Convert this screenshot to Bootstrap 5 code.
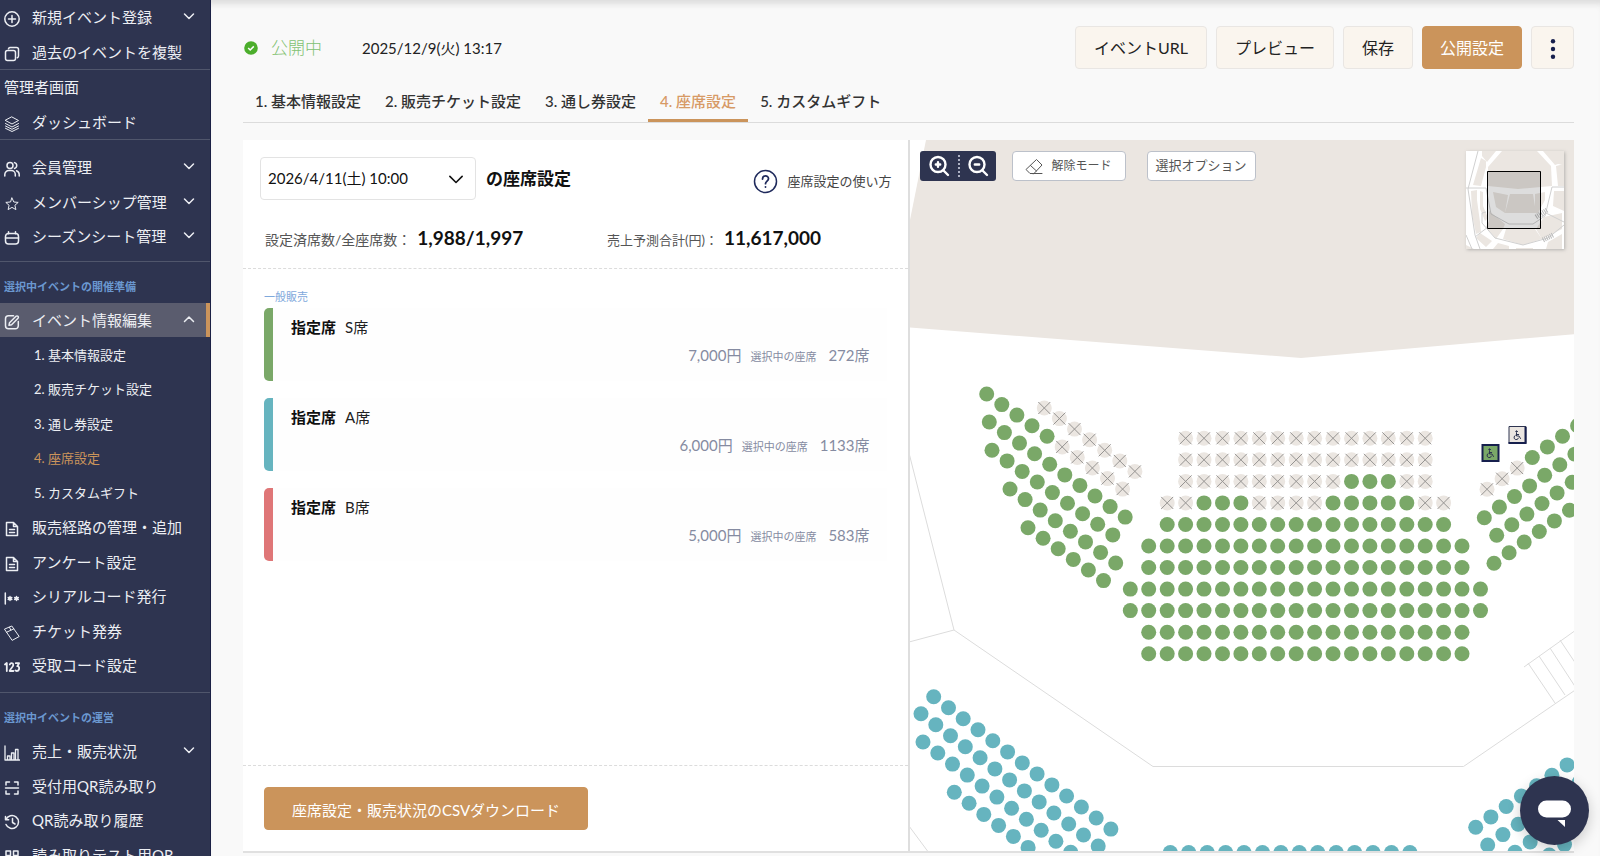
<!DOCTYPE html>
<html lang="ja">
<head>
<meta charset="utf-8">
<meta name="viewport" content="width=device-width, initial-scale=1">
<title>座席設定</title>
<link href="https://cdn.jsdelivr.net/npm/bootstrap@5.3.0/dist/css/bootstrap.min.css" rel="stylesheet">
<style>
  :root { --navy:#2e3450; --gold:#cb945b; --seat-s:#7aa868; --seat-a:#66b4bf; --seat-b:#df7677; --field:#ebe6e1; }
  body { font-family: Lato, "Noto Sans CJK JP", sans-serif; font-size:15px; line-height:24px; color:#222; background:#f9f9f9; }
  svg.ico { fill:none; stroke:currentColor; stroke-width:1.5; stroke-linecap:round; stroke-linejoin:round; flex:none; }

  .side { width:211px; flex:none; background:var(--navy); border-right:1px solid #1b2145; color:#eceef3; }
  .side .group { border-bottom:1px solid #50566c; }
  .side .group-pad { padding:10px 0 8px; }
  .side .group-end { padding-bottom:10px; }
  .side .nav-link { height:34px; padding:0 15px 0 4px; display:flex; align-items:center; color:inherit; white-space:nowrap; }
  .side .nav-item:nth-child(even) .nav-link { height:35px; }
  .side .nav-link .ico { width:16px; height:16px; margin:4px 12px 0 0; }
  .side .nav-link .chev { width:12px; height:12px; margin:0 0 2px auto; }
  .side .nav-link .fine { stroke-width:1; }
  .side .active-row { background:#5a5c6e; border-right:4px solid var(--gold); padding-right:11px; }
  .side .sub { padding-left:34px; font-size:13px; }
  .side .current { color:var(--gold); }
  .side .section-title { height:41px; padding:8px 0 0 4px; font-size:11px; font-weight:700; color:#6b98d0; margin:0; display:flex; align-items:center; }

  .main-area { min-width:0; padding:26px 26px 3px 32px; box-shadow:inset 0 8px 6px -4px #dcdcdc; }
  .status { color:#82c272; font-size:17px; font-weight:300; margin-left:13px; }
  .published { margin-left:40px; }
  .head-btn { height:43px; padding:0 18px; font-size:16px; border-color:#e9e6e3; background:#faf5ee; color:#222; border-radius:4px; }
  .btn-gold { background:var(--gold); border-color:var(--gold); color:#fff; border-radius:4px; }
  .head-btn.btn-gold { padding:0 17px; }
  .head-gap { gap:9px; }
  .head-btn.more { width:43px; padding:0; }

  .steps { border-bottom:1px solid #dcdcdc; margin-top:13px; }
  .steps .nav-link { padding:7px 12px 6px; color:#333; font-weight:500; border-bottom:3px solid transparent; }
  .steps .nav-link.active { color:#d79a66; border-color:var(--gold); }

  .panels { margin-top:17px; border-bottom:2px solid #e0e0e0; min-height:0; }
  .panel-half { flex:1 1 0; min-width:0; }
  .date-select { width:216px; height:43px; padding:0 36px 0 7px; font-size:15px; color:#111; border-color:#e3e3e3; border-radius:4px;
    background-image:url("data:image/svg+xml,%3Csvg xmlns='http://www.w3.org/2000/svg' viewBox='0 0 16 16'%3E%3Cpath fill='none' stroke='%23111' stroke-width='1.8' stroke-linecap='round' stroke-linejoin='round' d='m1 5 7 7 7-7'/%3E%3C/svg%3E");
    background-size:14px; background-position:right 12px center; }
  .panel-top { padding:17px 16px 0 17px; border-bottom:1px dashed #dcdcdc; height:129px; }
  .panel-title { font-size:17px; font-weight:700; color:#111; margin:0 0 0 10px; }
  .help { font-size:13px; color:#444; margin-top:5px; gap:9px; }
  .stats { margin-top:26px; padding-left:5px; }
  .stats dt { font-size:13px; font-weight:400; color:#555; }
  .stats dd { font-size:19px; font-weight:700; color:#111; margin:0 0 0 6px; }
  .stats .first-stat { width:342px; }
  .stats .first-stat dt { font-size:14px; }
  .tickets { padding:16px 21px 0; }
  .sale-type { font-size:11px; line-height:23px; color:#7fa9dc; }
  .ticket { height:73px; border-left:9px solid; border-radius:5px 0 0 5px; background:#fefefe; padding:7px 17px 0 18px; margin-bottom:17px; }
  .ticket .price-line { color:#858ba1; margin-top:4px; }
  .ticket small { font-size:11px; margin:0 12px 0 9px; }
  .ticket b { color:#111; margin-right:9px; }
  .tone-s { border-color:var(--seat-s); } .tone-a { border-color:var(--seat-a); } .tone-b { border-color:var(--seat-b); }
  .panel-foot { padding:21px; border-top:1px dashed #dcdcdc; height:86px; }
  .csv { height:43px; padding:4px 27px 0; font-size:15px; }

  .map { flex-basis:2px; border-left:2px solid #dedede; overflow:hidden; }
  .map-canvas { position:absolute; inset:0; }
  .map-tools { position:absolute; top:11px; left:10px; right:10px; }
  .zoomer { background:var(--navy); border-radius:3px; height:30px; width:76px; }
  .zoomer .btn { border:0; border-radius:0; padding:0; width:38px; color:#fff; }
  .zoomer .btn + .btn { border-left:2px dotted #aeb2c4; }
  .tool-btn { height:30px; padding:0 8px; font-size:13px; background:#fff; border-color:#bcc1ca; color:#555; border-radius:4px; }
  .tool-btn.erase { width:114px; font-size:12px; margin:0 21px 0 16px; }
  .mini { width:98px; height:98px; background:#fff; box-shadow:1px 1px 3px #8888; }
  .chat { position:fixed; right:11px; bottom:11px; width:69px; height:69px; border:0; border-radius:50%; background:var(--navy); padding:0; box-shadow:0 4px 14px #0003; }
</style>
</head>
<body>
<div class="d-flex vh-100 overflow-hidden">

  <aside class="side overflow-hidden">
    <ul class="nav flex-column flex-nowrap group">
      <li class="nav-item"><a class="nav-link" href="#"><svg class="ico" viewBox="0 0 16 16"><circle cx="8" cy="8" r="7.2"/><path d="M8 4.5v7M4.5 8h7"/></svg>新規イベント登録<svg class="ico chev" viewBox="0 0 12 12"><path d="m1.500 4 4.500 4.500L10.500 4"/></svg></a></li>
      <li class="nav-item"><a class="nav-link" href="#"><svg class="ico" viewBox="0 0 16 16"><rect x="1.500" y="4.500" width="10" height="10" rx="2"/><path d="M4.500 2.800A2 2 0 0 1 6 1.500h6.500a2 2 0 0 1 2 2V10a2 2 0 0 1-1.200 1.700"/></svg>過去のイベントを複製</a></li>
    </ul>
    <ul class="nav flex-column flex-nowrap group">
      <li class="nav-item"><a class="nav-link" href="#">管理者画面</a></li>
      <li class="nav-item"><a class="nav-link" href="#"><svg class="ico fine" viewBox="0 0 16 16"><path d="m8 1 6.500 3.500L8 8 1.500 4.500zM1.500 7.500 8 11l6.500-3.500M1.500 10 8 13.300l6.500-3.300M1.500 12.300 8 15.500l6.500-3.200"/></svg>ダッシュボード</a></li>
    </ul>
    <ul class="nav flex-column flex-nowrap group group-pad">
      <li class="nav-item"><a class="nav-link" href="#"><svg class="ico" viewBox="0 0 16 16"><circle cx="6" cy="4.500" r="3"/><path d="M.8 15v-1.500a4 4 0 0 1 4-4h2.500a4 4 0 0 1 4 4V15M10.500 1.600a3 3 0 0 1 0 5.800M12.500 9.700a4 4 0 0 1 2.700 3.800V15"/></svg>会員管理<svg class="ico chev" viewBox="0 0 12 12"><path d="m1.500 4 4.500 4.500L10.500 4"/></svg></a></li>
      <li class="nav-item"><a class="nav-link" href="#"><svg class="ico fine" viewBox="0 0 16 16"><path d="m8 2 1.800 4 4.400.4-3.300 2.900 1 4.300L8 11.400l-3.900 2.200 1-4.300-3.300-2.900 4.400-.4z"/></svg>メンバーシップ管理<svg class="ico chev" viewBox="0 0 12 12"><path d="m1.500 4 4.500 4.500L10.500 4"/></svg></a></li>
      <li class="nav-item"><a class="nav-link" href="#"><svg class="ico" viewBox="0 0 16 16"><rect x="1.500" y="3.500" width="13" height="10.500" rx="3"/><path d="M1.500 8h13M4.500 1.800v2M11.500 1.800v2"/></svg>シーズンシート管理<svg class="ico chev" viewBox="0 0 12 12"><path d="m1.500 4 4.500 4.500L10.500 4"/></svg></a></li>
    </ul>
    <h2 class="section-title">選択中イベントの開催準備</h2>
    <ul class="nav flex-column flex-nowrap group group-end">
      <li class="nav-item"><a class="nav-link active-row" href="#"><svg class="ico" viewBox="0 0 16 16"><path d="M9.500 1.800H4.500a3 3 0 0 0-3 3v7a3 3 0 0 0 3 3h6.800a3 3 0 0 0 3-3V7.500M5 11.300l.5-2.600 6.500-6.400a1.300 1.300 0 0 1 2 2L7.600 10.700z"/></svg>イベント情報編集<svg class="ico chev" viewBox="0 0 12 12"><path d="M1.500 8.500 6 4l4.500 4.500"/></svg></a></li>
      <li class="nav-item"><a class="nav-link sub" href="#">1. 基本情報設定</a></li>
      <li class="nav-item"><a class="nav-link sub" href="#">2. 販売チケット設定</a></li>
      <li class="nav-item"><a class="nav-link sub" href="#">3. 通し券設定</a></li>
      <li class="nav-item"><a class="nav-link sub current" href="#">4. 座席設定</a></li>
      <li class="nav-item"><a class="nav-link sub" href="#">5. カスタムギフト</a></li>
      <li class="nav-item"><a class="nav-link" href="#"><svg class="ico" viewBox="0 0 16 16"><path d="M9.500 1.500h-7v13h11v-9zM9.500 1.500v4h4M5.500 8.500h5M5.500 11.500h5"/></svg>販売経路の管理・追加</a></li>
      <li class="nav-item"><a class="nav-link" href="#"><svg class="ico" viewBox="0 0 16 16"><path d="M9.500 1.500h-7v13h11v-9zM9.500 1.500v4h4M5.500 8.500h5M5.500 11.500h5"/></svg>アンケート設定</a></li>
      <li class="nav-item"><a class="nav-link" href="#"><svg class="ico fine" viewBox="0 0 16 16"><path stroke-width="1.500" d="M1.300 3v11M6 6.500v4M4.200 7.500l3.600 2M7.800 7.500l-3.600 2M12.500 6.500v4M10.700 7.500l3.600 2M14.300 7.500l-3.600 2"/></svg>シリアルコード発行</a></li>
      <li class="nav-item"><a class="nav-link" href="#"><svg class="ico fine" viewBox="0 0 16 16"><path d="m.8 4 7-3 7.400 10.500-6.700 3.700zM2.500 7.300 9.800 3.800M5.500 2.200l1.300 2.900"/></svg>チケット発券</a></li>
      <li class="nav-item"><a class="nav-link" href="#"><svg class="ico" viewBox="0 0 16 16"><path stroke-width="1.800" d="M1 5.500 2.800 4v8M5.800 5.500C6.500 3.500 9.300 3.800 9.300 6c0 1.800-3.300 4-3.600 6h3.700M11.800 4.200h3.300l-1.800 3c2.700.2 2.400 4.800-.3 4.800-.6 0-1.100-.2-1.500-.6"/></svg>受取コード設定</a></li>
    </ul>
    <h2 class="section-title">選択中イベントの運営</h2>
    <ul class="nav flex-column flex-nowrap">
      <li class="nav-item"><a class="nav-link" href="#"><svg class="ico" viewBox="0 0 16 16"><path stroke-width="1.300" d="M1 1v14h14.500M3.500 15v-4h2.500v4M7.500 15V8H10v7M11.500 15V4.500H14V15"/></svg>売上・販売状況<svg class="ico chev" viewBox="0 0 12 12"><path d="m1.500 4 4.500 4.500L10.500 4"/></svg></a></li>
      <li class="nav-item"><a class="nav-link" href="#"><svg class="ico" viewBox="0 0 16 16"><path d="M2 5V2h3.500M10.500 2H14v3M2 11v3h3.500M10.500 14H14v-3M1.500 8h13"/></svg>受付用QR読み取り</a></li>
      <li class="nav-item"><a class="nav-link" href="#"><svg class="ico" viewBox="0 0 16 16"><path d="M2 5.500A6.500 6.500 0 1 1 2 10.500M1.500 2.500v3.200h3.200M8.500 4.500V8.500l2.500 1.500"/></svg>QR読み取り履歴</a></li>
      <li class="nav-item"><a class="nav-link" href="#"><svg class="ico" viewBox="0 0 16 16"><path d="M2 2h4.500v4.500H2zM9.500 2H14v4.500H9.500zM2 9.500h4.500V14H2zM9.500 9.500H12V12M14 14v-2"/></svg>読み取りテスト用QR</a></li>
    </ul>
  </aside>

  <main class="main-area flex-fill d-flex flex-column">
    <header class="d-flex align-items-center">
      <svg width="15" height="14" viewBox="-1 0 15 14"><circle cx="7" cy="7" r="6.800" fill="#4cae2c"/><path d="m4.200 7 2 2 3.600-3.600" fill="none" stroke="#fff" stroke-width="1.500"/></svg>
      <span class="status">公開中</span>
      <span class="published">2025/12/9(火) 13:17</span>
      <div class="d-flex head-gap ms-auto">
        <button class="btn head-btn" type="button">イベントURL</button>
        <button class="btn head-btn" type="button">プレビュー</button>
        <button class="btn head-btn" type="button">保存</button>
        <button class="btn head-btn btn-gold" type="button">公開設定</button>
        <button class="btn head-btn more" type="button" aria-label="その他"><svg width="6" height="20" viewBox="0 0 6 20" fill="#161f4d"><circle cx="3" cy="2.300" r="2.200"/><circle cx="3" cy="10" r="2.200"/><circle cx="3" cy="17.700" r="2.200"/></svg></button>
      </div>
    </header>

    <ul class="nav steps">
      <li class="nav-item"><a class="nav-link" href="#">1. 基本情報設定</a></li>
      <li class="nav-item"><a class="nav-link" href="#">2. 販売チケット設定</a></li>
      <li class="nav-item"><a class="nav-link" href="#">3. 通し券設定</a></li>
      <li class="nav-item"><a class="nav-link active" href="#" aria-current="page">4. 座席設定</a></li>
      <li class="nav-item"><a class="nav-link" href="#">5. カスタムギフト</a></li>
    </ul>

    <div class="panels d-flex flex-fill bg-white">
      <section class="panel-half d-flex flex-column">
        <div class="panel-top">
          <div class="d-flex align-items-center">
            <select class="form-select date-select" id="show" aria-labelledby="show-label"><option>2026/4/11(土) 10:00</option></select>
            <label class="panel-title" id="show-label" for="show">の座席設定</label>
            <a class="help d-flex align-items-center text-decoration-none ms-auto" href="#"><svg class="ico" width="25" height="25" viewBox="0 0 25 25" stroke="#1f2a5c"><g stroke="#1f2a5c"><circle cx="12.500" cy="12.500" r="11"/><path d="M9.500 10c0-4 6-4 6-.3 0 2.300-3 2.500-3 5M12.500 17.800v.3" stroke-width="1.800"/></g></svg>座席設定の使い方</a>
          </div>
          <dl class="stats d-flex mb-0">
            <div class="first-stat d-flex align-items-baseline"><dt>設定済席数/全座席数：</dt><dd>1,988/1,997</dd></div>
            <div class="d-flex align-items-baseline"><dt>売上予測合計(円)：</dt><dd>11,617,000</dd></div>
          </dl>
        </div>
        <div class="tickets flex-fill">
          <div class="sale-type">一般販売</div>
          <div class="ticket tone-s"><div><b>指定席</b>S席</div><div class="price-line text-end">7,000円<small>選択中の座席</small>272席</div></div>
          <div class="ticket tone-a"><div><b>指定席</b>A席</div><div class="price-line text-end">6,000円<small>選択中の座席</small>1133席</div></div>
          <div class="ticket tone-b"><div><b>指定席</b>B席</div><div class="price-line text-end">5,000円<small>選択中の座席</small>583席</div></div>
        </div>
        <div class="panel-foot"><button class="btn btn-gold csv" type="button">座席設定・販売状況のCSVダウンロード</button></div>
      </section>

      <section class="panel-half map position-relative">
        <svg class="map-canvas w-100 h-100" role="img" aria-label="座席表">
          <defs>
            <g id="seat"><circle r="7.500"/></g>
            <g id="closed"><circle r="7.500" fill="#ebe6e1"/><path d="M-6-6 6 6M6-6-6 6" stroke="#969492"/></g>
            <g id="wheel" fill="none" stroke="#2e3450" stroke-linecap="round"><circle cx="-1" cy="-3.500" r=".7" fill="#2e3450"/><path d="M-1-2v3h2.500L3 3.500M-1-.5h2.200M-2.200.3a2.300 2.300 0 1 0 3.200 2.800"/></g>
          </defs>
          <g transform="translate(-909 -140)">
            <path fill="#ebe6e1" d="M925 140 909 220v107.500l391 30.500 275-24V140z"/>
            <path fill="none" stroke="#dcdcdc" d="M908 453 953 630l-45 12M953 630l199 136.500h310.500L1575 689.500M908 826l20 27M1523 667l52-37M1527 663l27 40M1538 656l26 39M1549 648l26 40M1559 640l16 24"/>
            <g id="seats"></g>
            <g transform="translate(1489.500 453)"><path fill="#7aa868" stroke="#161f4d" stroke-width="2" d="M-8-8H8V8H-8z"/><use href="#wheel"/></g>
            <g transform="translate(1516.500 435)"><path fill="#ebe6e1" stroke="#2e3450" d="M-8.500-8.500h17v17h-17z"/><path fill="none" stroke="#161f4d" stroke-width="2" d="M8-8V8H-9"/><use href="#wheel"/></g>
          </g>
        </svg>

        <div class="map-tools d-flex align-items-start">
          <div class="zoomer d-flex align-items-stretch py-1">
            <button class="btn" type="button" aria-label="拡大"><svg class="ico d-block mx-auto" width="22" height="22" viewBox="0 0 22 22"><g stroke-width="2.400"><circle cx="10" cy="9.500" r="7.500"/><path d="m15.500 15.500 4.500 4.500M10 7.300v4.400M7.800 9.500h4.400"/></g></svg></button>
            <button class="btn" type="button" aria-label="縮小"><svg class="ico d-block mx-auto" width="22" height="22" viewBox="0 0 22 22"><g stroke-width="2.400"><circle cx="10" cy="9.500" r="7.500"/><path d="m15.500 15.500 4.500 4.500M7.800 9.500h4.400"/></g></svg></button>
          </div>
          <button class="btn tool-btn erase d-flex align-items-center justify-content-center" type="button"><svg class="ico me-2" width="18" height="17" viewBox="0 0 18 17"><path stroke-width="1" d="M6.500 15.500h10.500M6.500 15.500H5L1 11.500 11.500 1.500 17 7l-8 8.500zM5.500 7.500l6 5.500"/></svg>解除モード</button>
          <button class="btn tool-btn" type="button">選択オプション</button>
          <svg class="mini ms-auto" viewBox="0 0 98 98" role="img" aria-label="全体図">
            <g fill="#ebe6e1">
              <path d="M36 0h35l14 15 1 20-34 3-30-3V16z"/>
              <path d="M15 7l5 3v6l-5 19-8-1zM16 0h14L21 11l-5-6zM77 0h21v14l-6-1-3 1zM90 15l8-2v22h-6zM5 40l6-1v10l3 22 1 10-5 2-4-20zM14 40l3 1v14l5 12-3 3-5-12zM88 40h10v20l-11-5zM27 41l15 3-3 18-9-6zM44 43h23l3 19H39zM69 43l10-2v8l-7 13h-3zM23 60l16 13-2 5-14-6zM23 70l14 8-7 10-10-12zM40 78h29l7 10-19 6-20-6zM78 66l18-4v16l-20 10-6-10zM14 82l12 8-6 6-10-9zM0 94l8 4H0zM32 92l11 3v3H27zM50 97h17v1H50zM82 91l14-8v15H80z"/>
            </g>
            <path fill="none" stroke="#d0d0d0" d="M12 0 2 38l7 46 5 14M0 37h20l5 26 18 10h24l12-8 7-29h12M20 61l-4 1v10l13 15 28 7 25-7 16-13M9 86l13-10M76 66l4-4 18 9M0 84l6 14"/>
            <path stroke="#bbb" stroke-width="5" stroke-dasharray="1 1" d="m70 66 11-7M77 89l10-5"/>
            <path d="M21.500 20.500h53v57h-53z" fill="#0002" stroke="#000"/>
          </svg>
        </div>
      </section>
    </div>
  </main>
</div>

<button class="chat" type="button" aria-label="チャット"><svg width="69" height="69" viewBox="0 0 69 69" fill="#fff"><rect x="18" y="24.500" width="33" height="17" rx="8.500"/><path d="M37.500 44h7.500v7z"/></svg></button>

<script src="https://cdn.jsdelivr.net/npm/bootstrap@5.3.0/dist/js/bootstrap.bundle.min.js"></script>
<script>
  // Each row: start x, start y, step x, step y, seats (s / a = ticket type, x = closed, - = aisle)
  const rows = [];
  const centre = ['---xxxxxxxxxxxxxx', '---xxxxxxxxxxxxxx', '---xxxxxxxxxsssxx', '--xxsssxxxxsssssxx',
    '--' + 's'.repeat(16), '-' + 's'.repeat(18), '-' + 's'.repeat(18), 's'.repeat(20), 's'.repeat(20),
    '-' + 's'.repeat(18), '-' + 's'.repeat(18)];
  centre.forEach((seats, i) => rows.push([1129.3, 438.3 + i * 21.54, 18.43, 0, seats]));
  [[1043.3, 408, 'xxxxxxx'], [985.7, 394, 'sssssxxxxx'], [988.3, 422, 'ssssssssss'], [991, 450.3, 'sssssssss'],
   [1009, 489, 'ssssssss'], [1027, 527.7, 'ssssss']].forEach(([x, y, s]) => rows.push([x, y, 15.1, 10.57, s]));
  [[1486, 489.3, 'xxxssss'], [1483.3, 517.7, 'sssssss'], [1495.7, 535.3, 'ssssss'],
   [1493, 563.3, 'ssssss']].forEach(([x, y, s]) => rows.push([x, y, 15.1, -10.6, s]));
  [[932.7, 696.7, 13], [920, 713.7, 13], [922, 742, 11], [953.3, 792.3, 6]]
    .forEach(([x, y, n]) => rows.push([x, y, 14.77, 11.03, 'a'.repeat(n)]));
  rows.push([1169.3, 852.5, 18.43, 0, 'a'.repeat(14)]);
  [[1474.7, 827.3, 8], [1486.7, 845, 7], [1514, 852.3, 5], [1548.3, 855, 3]]
    .forEach(([x, y, n]) => rows.push([x, y, 15.23, -10.4, 'a'.repeat(n)]));

  const fills = { s: '#7aa868', a: '#66b4bf' };
  document.getElementById('seats').innerHTML = rows.map(([x, y, dx, dy, seats]) =>
    [...seats].map((kind, i) => kind === '-' ? '' :
      `<use href="#${kind === 'x' ? 'closed' : 'seat'}" fill="${fills[kind] || 'none'}" x="${(x + i * dx).toFixed(1)}" y="${(y + i * dy).toFixed(1)}"/>`
    ).join('')).join('');
</script>
</body>
</html>
